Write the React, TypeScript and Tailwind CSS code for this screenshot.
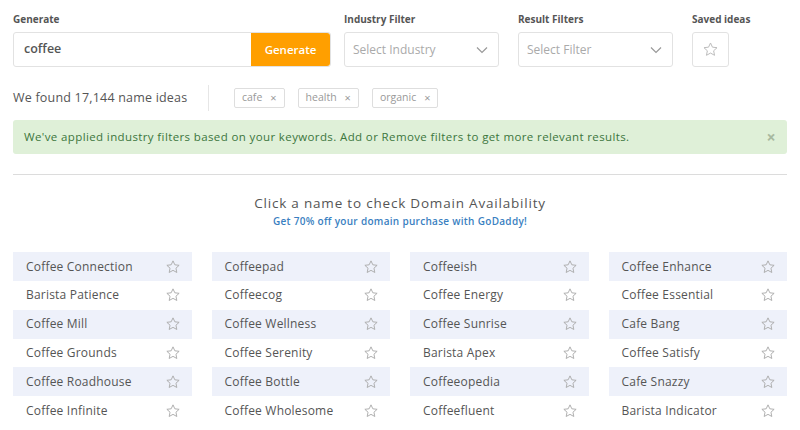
import React from "react";

const names = [
  ["Coffee Connection", "Coffeepad", "Coffeeish", "Coffee Enhance"],
  ["Barista Patience", "Coffeecog", "Coffee Energy", "Coffee Essential"],
  ["Coffee Mill", "Coffee Wellness", "Coffee Sunrise", "Cafe Bang"],
  ["Coffee Grounds", "Coffee Serenity", "Barista Apex", "Coffee Satisfy"],
  ["Coffee Roadhouse", "Coffee Bottle", "Coffeeopedia", "Cafe Snazzy"],
  ["Coffee Infinite", "Coffee Wholesome", "Coffeefluent", "Barista Indicator"],
];

function Star({ size = 15, color = "#9a9a9a" }: { size?: number; color?: string }) {
  return (
    <svg width={size} height={size} viewBox="0 0 24 24" fill="none" stroke={color} strokeWidth={1.4} strokeLinejoin="round">
      <path d="M12 2.8l2.75 5.9 6.45.75-4.78 4.4 1.3 6.37L12 17.02l-5.72 3.2 1.3-6.37-4.78-4.4 6.45-.75z" />
    </svg>
  );
}

function Chevron() {
  return (
    <svg width="12" height="8" viewBox="0 0 12 8" fill="none" stroke="#999" strokeWidth={1.2}>
      <path d="M1 1.5l5 5 5-5" />
    </svg>
  );
}

function Tag({ label }: { label: string }) {
  return (
    <div className="flex h-[20px] items-center gap-[8px] rounded-[2px] border border-[#dedede] px-[7px] text-[10.5px] text-[#999]">
      <span>{label}</span>
      <span className="text-[11px] text-[#999]">×</span>
    </div>
  );
}

export default function App() {
  const cols = [0, 1, 2, 3];
  return (
    <div className="h-[430px] w-[800px] overflow-hidden bg-white px-[13px] pt-[12px] text-[#555]" style={{ fontFamily: '"Open Sans", "Liberation Sans", sans-serif' }}>
      <div className="flex">
        <div className="w-[318px]">
          <div className="h-[20px] text-[10px] font-bold text-[#555]">Generate</div>
          <div className="flex h-[35px] rounded-[3px] border border-[#e2e2e2]">
            <div className="flex flex-1 items-center pl-[10px] text-[12.5px] font-semibold text-[#555]">coffee</div>
            <div className="flex w-[79px] items-center justify-center rounded-r-[3px] bg-[#ff9f00] text-[11.5px] font-semibold text-white">Generate</div>
          </div>
        </div>
        <div className="ml-[13px] w-[155px]">
          <div className="h-[20px] text-[10px] font-bold text-[#555]">Industry Filter</div>
          <div className="flex h-[35px] items-center justify-between rounded-[3px] border border-[#e2e2e2] pl-[8px] pr-[10px] text-[12px] text-[#aaa]">
            <span>Select Industry</span>
            <Chevron />
          </div>
        </div>
        <div className="ml-[19px] w-[155px]">
          <div className="h-[20px] text-[10px] font-bold text-[#555]">Result Filters</div>
          <div className="flex h-[35px] items-center justify-between rounded-[3px] border border-[#e2e2e2] pl-[8px] pr-[10px] text-[12px] text-[#aaa]">
            <span>Select Filter</span>
            <Chevron />
          </div>
        </div>
        <div className="ml-[19px]">
          <div className="h-[20px] text-[10px] font-bold text-[#555]">Saved ideas</div>
          <div className="flex h-[35px] w-[37px] items-center justify-center rounded-[3px] border border-[#e2e2e2]">
            <Star size={17} color="#bbb" />
          </div>
        </div>
      </div>

      <div className="mt-[18px] flex h-[26px] items-center">
        <div className="w-[195px] text-[12.5px] tracking-[0.2px] text-[#555]">We found 17,144 name ideas</div>
        <div className="h-[26px] w-px bg-[#e6e6e6]" />
        <div className="ml-[25px] flex gap-[13px]">
          <Tag label="cafe" />
          <Tag label="health" />
          <Tag label="organic" />
        </div>
      </div>

      <div className="mt-[9px] flex h-[34px] items-center justify-between rounded-[3px] bg-[#dff0d8] pl-[11px] pr-[11px] text-[11.5px] tracking-[0.38px] text-[#3c763d]">
        <span>We've applied industry filters based on your keywords. Add or Remove filters to get more relevant results.</span>
        <span className="text-[16px] font-bold text-[#a8b9a0]">×</span>
      </div>

      <div className="mt-[20px] h-px bg-[#dcdcdc]" />

      <div className="mt-[18px] text-center text-[13.5px] tracking-[0.8px] text-[#555]">Click a name to check Domain Availability</div>
      <div className="mt-[1px] text-center text-[10px] font-semibold tracking-[0.3px] text-[#3a7fc1]">Get 70% off your domain purchase with GoDaddy!</div>

      <div className="mt-[23px] grid grid-cols-4 gap-x-[20px]">
        {cols.map((c) => (
          <div key={c} className="flex flex-col">
            {names.map((row, r) => (
              <div key={r} className={`flex h-[28.8px] items-center justify-between pl-[13px] pr-[11px] ${r % 2 === 0 ? "bg-[#eef1fa]" : "bg-white"}`}>
                <span className="text-[12px] tracking-[0.2px] text-[#555]">{row[c]}</span>
                <Star size={16} color="#aaa" />
              </div>
            ))}
          </div>
        ))}
      </div>
    </div>
  );
}
